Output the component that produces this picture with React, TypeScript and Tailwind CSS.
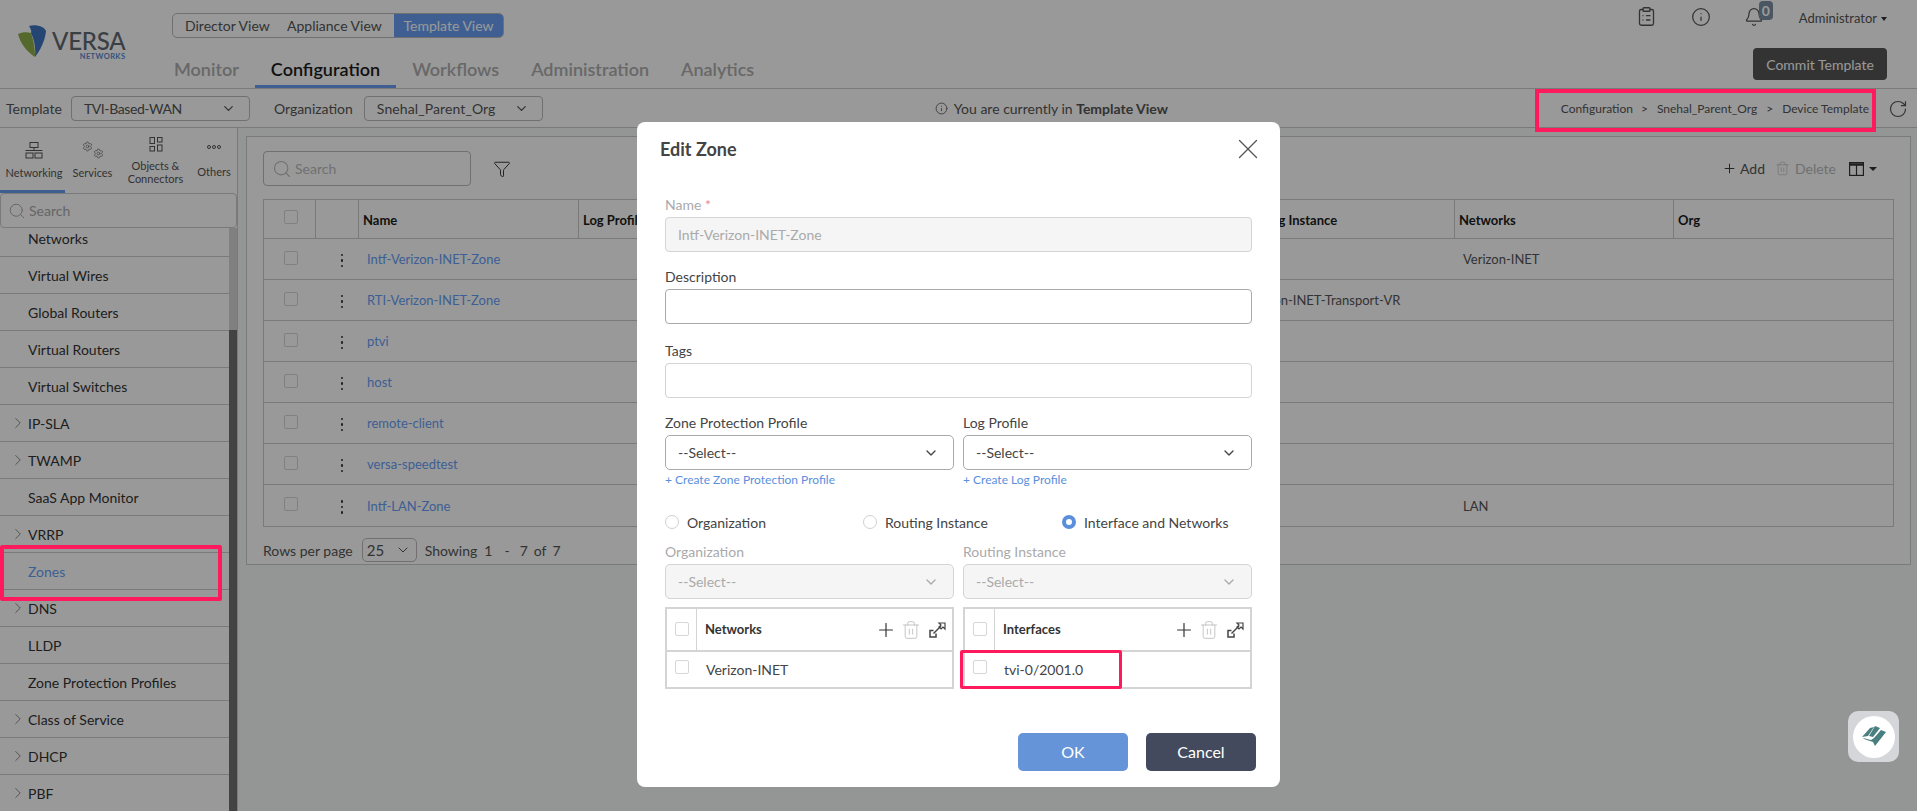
import React from "react";
import { Bell, ChevronDown, ChevronRight, ClipboardList, Filter, Info, Plus, RotateCw, Search, Settings, Trash2, X } from "lucide-react";

const sideItems = [
  { label: "Networks", h: "h-[29px] items-start" },
  { label: "Virtual Wires" },
  { label: "Global Routers" },
  { label: "Virtual Routers" },
  { label: "Virtual Switches" },
  { label: "IP-SLA", arrow: true },
  { label: "TWAMP", arrow: true },
  { label: "SaaS App Monitor" },
  { label: "VRRP", arrow: true },
  { label: "Zones", active: true },
  { label: "DNS", arrow: true },
  { label: "LLDP" },
  { label: "Zone Protection Profiles" },
  { label: "Class of Service", arrow: true },
  { label: "DHCP", arrow: true },
  { label: "PBF", arrow: true },
];

const rows = [
  { name: "Intf-Verizon-INET-Zone", network: "Verizon-INET" },
  { name: "RTI-Verizon-INET-Zone", routing: "Verizon-INET-Transport-VR" },
  { name: "ptvi" },
  { name: "host" },
  { name: "remote-client" },
  { name: "versa-speedtest" },
  { name: "Intf-LAN-Zone", network: "LAN" },
];

const Check = () => <div className="w-[14px] h-[14px] rounded-[2px] border border-[#d6d6d6] bg-white" />;

const ExpandIcon = () => (
  <svg width="17" height="16" viewBox="0 0 17 16" fill="none" stroke="#444" strokeWidth="1.2">
    <path d="M4.5 8.5 H1 V15 H7 V11.5" strokeWidth="1.5" />
    <path d="M4.5 11.5 L12 4" strokeWidth="1.5" />
    <path d="M10 1 H16 V7 L14 5 L12 7 L10 5 L12 3 Z" />
  </svg>
);

const SubTable = ({ title, value }: { title: string; value: string }) => (
  <div className="flex-1 border-2 border-[#d4d4d4]">
    <div className="flex h-[43px] border-b-2 border-[#d4d4d4]">
      <div className="w-[30px] border-r border-[#d4d4d4] pl-[8px] pt-[13px]">
        <Check />
      </div>
      <div className="flex-1 flex items-center pl-[8px] pr-[6px]">
        <span className="text-[13px] font-bold text-[#333] flex-1">{title}</span>
        <Plus size={22} strokeWidth={1.3} className="text-[#333]" />
        <Trash2 size={20} strokeWidth={1} className="text-[#bbb] ml-[4px]" />
        <div className="ml-[8px]"><ExpandIcon /></div>
      </div>
    </div>
    <div className="flex h-[35px]">
      <div className="w-[30px] pl-[8px] pt-[8px]">
        <Check />
      </div>
      <div className="flex-1 flex items-center pl-[9px] text-[14px] text-[#444]">{value}</div>
    </div>
  </div>
);

const ModalSelect = ({ disabled }: { disabled?: boolean }) => (
  <div className={`h-[35px] rounded-[5px] border flex items-center justify-between pl-[12px] pr-[14px] text-[14px] ${disabled ? "bg-[#f5f5f5] border-[#d4d4d4] text-[#aaa]" : "bg-white border-[#aaa] text-[#444]"}`}>
    <span>--Select--</span>
    <ChevronDown size={16} className={disabled ? "text-[#aaa]" : "text-[#444]"} />
  </div>
);

const Radio = ({ label, on, className }: { label: string; on?: boolean; className: string }) => (
  <div className={`flex items-center gap-[8px] text-[14px] text-[#444] ${className}`}>
    {on ? (
      <div className="w-[14px] h-[14px] rounded-full border-[4px] border-[#5b8fdb] bg-white" />
    ) : (
      <div className="w-[14px] h-[14px] rounded-full border border-[#d0d0d0] bg-white" />
    )}
    <span>{label}</span>
  </div>
);

export default function App() {
  return (
    <div className="relative w-[1917px] h-[811px] overflow-hidden bg-white font-['Lato',sans-serif] text-[14px] text-[#555]">
      {/* top header */}
      <header className="flex h-[89px] border-b border-[#cbcbcb]">
        <div className="w-[158px] flex pl-[18px] pt-[25px]">
          <svg width="28" height="32" viewBox="0 0 28 32" className="shrink-0">
            <path d="M0 9 C4 7 9 7 13 8 C15 14 17 22 17 32 C9 27 2 18 0 9Z" fill="#8fb04a" />
            <path d="M11 1 C17 -1 26 1 28 6 C27 16 22 26 17 32 C18 22 16 14 13 8 C14 6 12 3 11 1Z" fill="#3f74c0" />
          </svg>
          <div className="ml-[6px] mt-[4px] flex flex-col items-end">
            <span className="text-[24px] leading-[24px] font-medium tracking-[-0.2px] text-[#616972]">VERSA</span>
            <span className="text-[7.5px] leading-[7px] font-bold tracking-[0.4px] text-[#5a8ad0]">NETWORKS</span>
          </div>
        </div>
        <div className="flex-1 flex flex-col">
          <div className="ml-[14px] mt-[13px] w-[332px] h-[25px] rounded-[5px] border border-[#bbb] flex overflow-hidden text-[14px]">
            <span className="pl-[12px] w-[106px] flex items-center">Director View</span>
            <span className="w-[115px] pl-[8px] flex items-center">Appliance View</span>
            <span className="flex-1 bg-[#699ff5] text-white flex items-center justify-center">Template View</span>
          </div>
          <nav className="flex mt-auto text-[18px] font-semibold text-[#aeaeae]">
            <span className="px-4 h-[47px] pt-[15px]">Monitor</span>
            <span className="px-4 h-[47px] pt-[15px] text-[#1c1c1c] border-b-[3px] border-[#699ff5]">Configuration</span>
            <span className="px-4 h-[47px] pt-[15px]">Workflows</span>
            <span className="px-4 h-[47px] pt-[15px]">Administration</span>
            <span className="px-4 h-[47px] pt-[15px]">Analytics</span>
          </nav>
        </div>
        <div className="flex flex-col items-end pr-[30px]">
          <div className="flex items-center h-[36px] text-[#555]">
            <ClipboardList size={21} strokeWidth={1.5} className="-mt-[3px]" />
            <Info size={20} strokeWidth={1.5} className="ml-[34px] -mt-[3px]" />
            <div className="relative ml-[33px] -mt-[3px]">
              <Bell size={20} strokeWidth={1.5} />
              <span className="absolute left-[15px] top-[-6px] w-[14px] h-[19px] rounded-[4px] bg-[#7d8fa5] text-white text-[14px] leading-[19px] font-bold text-center">0</span>
            </div>
            <span className="ml-[35px] mt-[2px] text-[13px]">Administrator</span>
            <span className="ml-[4px] mt-[2px] w-0 h-0 border-x-[3px] border-x-transparent border-t-[4px] border-t-[#333]" />
          </div>
          <button className="mt-[12px] w-[134px] h-[32px] rounded-[4px] bg-[#555] text-white text-[14px]">Commit Template</button>
        </div>
      </header>

      {/* toolbar */}
      <div className="flex items-center h-[39px] pt-[1px] border-b border-[#cbcbcb] text-[14px]">
        <span className="ml-[6px]">Template</span>
        <div className="ml-[9px] w-[179px] h-[25px] rounded-[4px] border border-[#bbb] flex items-center justify-between pl-[12px] pr-[13px]">
          <span className="tracking-[-0.4px]">TVI-Based-WAN</span>
          <ChevronDown size={15} />
        </div>
        <span className="ml-[24px]">Organization</span>
        <div className="ml-[11px] w-[179px] h-[25px] rounded-[4px] border border-[#bbb] flex items-center justify-between pl-[12px] pr-[13px]">
          <span className="tracking-[0.1px]">Snehal_Parent_Org</span>
          <ChevronDown size={15} />
        </div>
        <div className="ml-[392px] flex items-center gap-[6px] w-[500px]">
          <Info size={13} strokeWidth={1.5} />
          <span>You are currently in <b className="font-bold">Template View</b></span>
        </div>
        <div className="ml-auto flex items-center text-[12px]">
          <span>Configuration</span>
          <span className="ml-[8px] mr-[9px]">&gt;</span>
          <span>Snehal_Parent_Org</span>
          <span className="mx-[9px]">&gt;</span>
          <span>Device Template</span>
        </div>
        <RotateCw size={20} strokeWidth={1.4} className="ml-[19px] mr-[9px]" />
      </div>

      <div className="flex h-[683px]">
        {/* sidebar */}
        <aside className="w-[238px] shrink-0 flex flex-col border-r border-[#cbcbcb]">
          <div className="flex h-[65px] text-[11px] leading-[13px] text-center">
            <div className="w-[65px] pl-[3px] border-b-[3px] border-[#699ff5] flex flex-col items-center pt-[12px]">
              <svg width="20" height="20" viewBox="0 0 20 20" fill="none" stroke="#555" strokeWidth="1">
                <rect x="6" y="2.5" width="8" height="5" />
                <path d="M10 7.5 V10.5 M1.5 10.5 H18.5" />
                <rect x="2" y="13" width="7" height="5" />
                <rect x="11" y="13" width="7" height="5" />
              </svg>
              <span className="mt-[6px]">Networking</span>
            </div>
            <div className="w-[55px] flex flex-col items-center pt-[13px]">
              <div className="flex h-[20px] text-[#555]">
                <Settings size={11} strokeWidth={1.3} />
                <Settings size={11} strokeWidth={1.3} className="mt-[7px]" />
              </div>
              <span className="mt-[5px]">Services</span>
            </div>
            <div className="w-[71px] flex flex-col items-center pt-[9px]">
              <svg width="14" height="15" viewBox="0 0 14 15" fill="none" stroke="#555">
                <rect x="1" y="0.5" width="4.5" height="6" />
                <rect x="8.5" y="0.5" width="4.5" height="4.5" />
                <rect x="1" y="9.5" width="4.5" height="4.5" />
                <rect x="8.5" y="8" width="4.5" height="6" />
              </svg>
              <span className="mt-[7px]">Objects &amp;<br />Connectors</span>
            </div>
            <div className="flex-1 flex flex-col items-center pt-[17px]">
              <div className="flex gap-[1px] h-[12px]">
                <span className="w-[4px] h-[4px] rounded-full border border-[#555]" />
                <span className="w-[4px] h-[4px] rounded-full border border-[#555]" />
                <span className="w-[4px] h-[4px] rounded-full border border-[#555]" />
              </div>
              <span className="mt-[8px]">Others</span>
            </div>
          </div>
          <div className="h-[35px] w-[237px] rounded-[4px] border border-[#cbcbcb] flex items-center pl-[7px] gap-[3px] text-[#aaa]">
            <Search size={18} strokeWidth={1.3} />
            <span>Search</span>
          </div>
          <div className="flex flex-1 min-h-0">
            <div className="flex-1 overflow-hidden">
              {sideItems.map((item) => (
                <div
                  key={item.label}
                  className={`relative flex pl-[28px] border-b border-[#cbcbcb] ${item.h ? item.h : "h-[37px] items-center"} ${item.active ? "text-[#689ef7]" : "text-[#333]"}`}
                >
                  {item.arrow && <ChevronRight size={18} strokeWidth={1} className="absolute left-[9px] top-[9px] text-[#666]" />}
                  {item.label}
                </div>
              ))}
            </div>
            <div className="w-[8px] bg-[#717171]">
              <div className="h-[102px] bg-[#d5d5d5]" />
            </div>
          </div>
        </aside>

        {/* main content */}
        <main className="flex-1 bg-[#f7f8f9] pl-[8px] pr-[8px] pt-[8px]">
          <div className="h-[429px] bg-white border border-[#cbcbcb] px-[16px] pt-[14px]">
            <div className="flex items-center h-[35px]">
              <div className="w-[208px] h-[35px] rounded-[4px] border border-[#bbb] flex items-center pl-[8px] gap-[3px] text-[#bbb]">
                <Search size={20} strokeWidth={1.3} />
                <span>Search</span>
              </div>
              <Filter size={18} strokeWidth={1.3} className="ml-[22px] text-[#333]" />
              <div className="ml-auto flex items-center mr-[17px]">
                <Plus size={15} strokeWidth={1.5} className="text-[#333]" />
                <span className="ml-[3px]">Add</span>
                <Trash2 size={15} strokeWidth={1.1} className="ml-[10px] text-[#bbb]" />
                <span className="ml-[5px] text-[#bbb]">Delete</span>
                <svg width="15" height="14" viewBox="0 0 15 14" className="ml-[13px]" fill="none" stroke="#333" strokeWidth="1.2">
                  <rect x="0.6" y="0.6" width="13.8" height="12.8" />
                  <path d="M0.6 2.5 H14.4" strokeWidth="2.5" />
                  <path d="M7.5 2 V13" />
                </svg>
                <span className="ml-[5px] w-0 h-0 border-x-[4px] border-x-transparent border-t-[4px] border-t-[#333]" />
              </div>
            </div>
            <div className="mt-[13px] border border-[#cbcbcb] text-[13px]">
              <div className="flex h-[39px] items-center border-b border-[#cbcbcb] font-bold text-[#1c1c1c]">
                <div className="w-[52px] h-full border-r border-[#cbcbcb] pl-[20px] pt-[10px]"><Check /></div>
                <div className="w-[43px] h-full border-r border-[#cbcbcb]" />
                {["Name", "Log Profile", "Organization", "Interfaces", "Routing Instance", "Networks", "Org"].map((h, i) => (
                  <div key={h} className={`h-full flex items-center pl-[4px] pt-[3px] ${i < 6 ? "border-r border-[#cbcbcb]" : ""} ${i === 0 ? "w-[220px]" : "w-[219px]"}`}>{h}</div>
                ))}
              </div>
              {rows.map((r, i) => (
                <div key={r.name} className={`flex h-[41px] ${i < rows.length - 1 ? "border-b border-[#cbcbcb]" : ""}`}>
                  <div className="w-[52px] pl-[20px] pt-[12px]"><Check /></div>
                  <div className="w-[43px] flex flex-col items-center justify-center gap-[3px] pl-[9px] pt-[3px]">
                    <span className="w-[2.5px] h-[2.5px] rounded-full bg-[#333]" />
                    <span className="w-[2.5px] h-[2.5px] rounded-full bg-[#333]" />
                    <span className="w-[2.5px] h-[2.5px] rounded-full bg-[#333]" />
                  </div>
                  <div className="w-[220px] flex items-center pl-[8px] pt-[2px] text-[#689ef7]">{r.name}</div>
                  <div className="w-[657px]" />
                  <div className="w-[219px] flex items-center pl-[9px] pt-[2px]">{r.routing}</div>
                  <div className="w-[219px] flex items-center pl-[8px] pt-[2px]">{r.network}</div>
                </div>
              ))}
            </div>
            <div className="flex items-center h-[24px] mt-[11px]">
              <span>Rows per page</span>
              <div className="ml-[9px] w-[55px] h-[24px] rounded-[5px] border border-[#bbb] flex items-center justify-between pl-[4px] pr-[5px]">
                <span className="text-[15px]">25</span>
                <ChevronDown size={16} strokeWidth={1.5} />
              </div>
              <span className="ml-[8px]">Showing</span>
              <span className="ml-[7px]">1</span>
              <span className="ml-[12px]">-</span>
              <span className="ml-[10px]">7</span>
              <span className="ml-[6px]">of</span>
              <span className="ml-[6px]">7</span>
            </div>
          </div>
        </main>
      </div>

      {/* dim layer */}
      <div className="absolute inset-0 bg-black/40" />

      {/* edit zone modal */}
      <div className="absolute left-[637px] top-[122px] w-[643px] h-[665px] rounded-[8px] bg-white px-[28px] text-[#444]">
        <div className="h-[54px] flex items-center justify-between -ml-[5px] -mr-[13px]">
          <span className="text-[18px] font-bold text-[#444]">Edit Zone</span>
          <X size={34} strokeWidth={0.9} className="text-[#555]" />
        </div>
        <div className="mt-[20px] h-[18px] leading-[18px] text-[#aaa]">Name <span className="text-[#e88]">*</span></div>
        <div className="mt-[3px] h-[35px] rounded-[4px] border border-[#d4d4d4] bg-[#f5f5f5] flex items-center pl-[12px] text-[#aaa]">Intf-Verizon-INET-Zone</div>
        <div className="mt-[16px] h-[18px] leading-[18px]">Description</div>
        <div className="mt-[3px] h-[35px] rounded-[4px] border border-[#aaa]" />
        <div className="mt-[18px] h-[18px] leading-[18px]">Tags</div>
        <div className="mt-[3px] h-[35px] rounded-[4px] border border-[#d4d4d4]" />
        <div className="mt-[16px] flex gap-[9px]">
          <div className="flex-1">
            <div className="h-[18px] leading-[18px] mb-[3px]">Zone Protection Profile</div>
            <ModalSelect />
            <div className="mt-[2px] h-[16px] leading-[16px] text-[12px] text-[#5a8fdc]">+ Create Zone Protection Profile</div>
          </div>
          <div className="flex-1">
            <div className="h-[18px] leading-[18px] mb-[3px]">Log Profile</div>
            <ModalSelect />
            <div className="mt-[2px] h-[16px] leading-[16px] text-[12px] text-[#5a8fdc]">+ Create Log Profile</div>
          </div>
        </div>
        <div className="mt-[26px] h-[16px] flex">
          <Radio label="Organization" className="w-[198px]" />
          <Radio label="Routing Instance" className="w-[199px]" />
          <Radio label="Interface and Networks" on className="" />
        </div>
        <div className="mt-[13px] flex gap-[9px]">
          <div className="flex-1">
            <div className="h-[18px] leading-[18px] mb-[3px] text-[#aaa]">Organization</div>
            <ModalSelect disabled />
          </div>
          <div className="flex-1">
            <div className="h-[18px] leading-[18px] mb-[3px] text-[#aaa]">Routing Instance</div>
            <ModalSelect disabled />
          </div>
        </div>
        <div className="mt-[8px] flex gap-[9px]">
          <SubTable title="Networks" value="Verizon-INET" />
          <SubTable title="Interfaces" value="tvi-0/2001.0" />
        </div>
        <div className="mt-[44px] flex justify-end gap-[18px] -mr-[4px]">
          <button className="w-[110px] h-[38px] rounded-[5px] bg-[#6694d8] text-white text-[16px]">OK</button>
          <button className="w-[110px] h-[38px] rounded-[5px] bg-[#434a5e] text-white text-[16px]">Cancel</button>
        </div>
      </div>

      {/* annotation boxes */}
      <div className="absolute left-[1535px] top-[89px] w-[341px] h-[43px] border-[4px] border-[#ff1a5e]" />
      <div className="absolute left-0 top-[545px] w-[222px] h-[56px] border-[4px] border-[#ff1a5e] rounded-[2px]" />
      <div className="absolute left-[960px] top-[650px] w-[162px] h-[39px] border-[3px] border-[#ff1a5e] rounded-[2px]" />

      {/* help widget */}
      <div className="absolute left-[1848px] top-[711px] w-[51px] h-[51px] rounded-[10px] bg-[#d4d6da] flex items-center justify-center">
        <div className="w-[42px] h-[42px] rounded-full bg-white flex items-center justify-center">
          <svg width="24" height="21" viewBox="0 0 24 21" fill="#4a7f80">
            <path d="M0 11 L8 2 L12 1 L6 10 Z" />
            <path d="M7 10 L13 0 L18 2 L11 11 Z" />
            <path d="M12 12 L19 4 L24 6 L13 20 L11 16 L2 13 L1 12 L9 14 Z" />
          </svg>
        </div>
      </div>
    </div>
  );
}
